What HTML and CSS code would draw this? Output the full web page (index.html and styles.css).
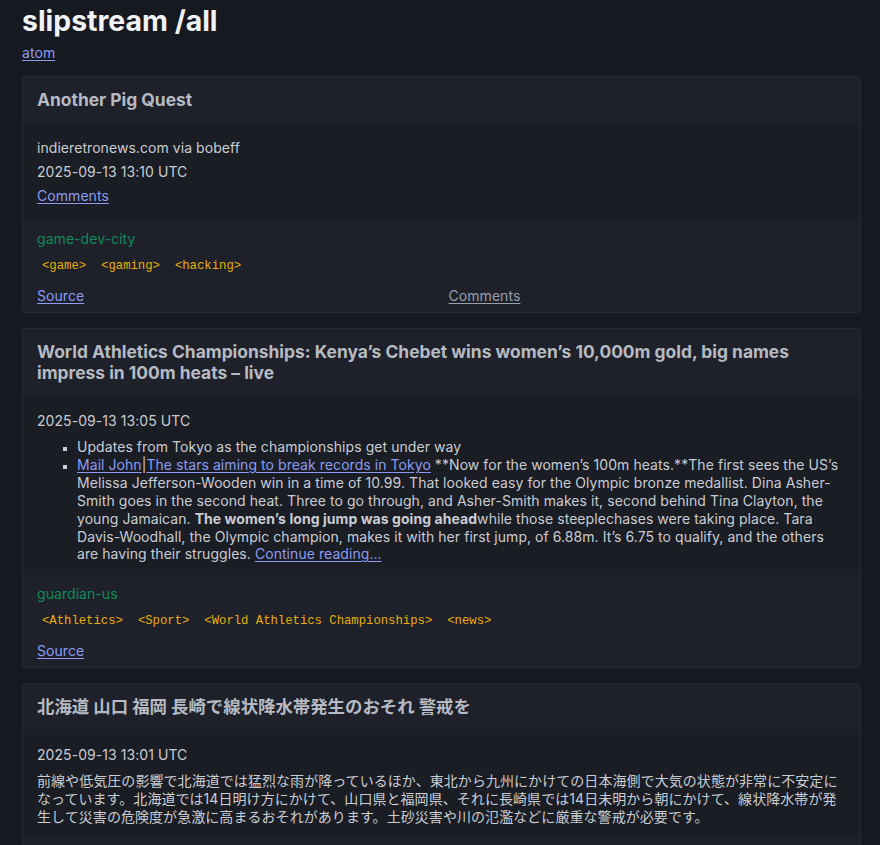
FILE: index.html
```html
<!DOCTYPE html>
<html lang="en">
<head>
<meta charset="utf-8">
<title>slipstream /all</title>
<link rel="stylesheet" href="styles.css">
</head>
<body>
<div class="page">
  <h1 class="site-title">slipstream /all</h1>
  <a class="feed-link" href="#">atom</a>

  <div class="feed">
    <article class="card">
      <header class="card-head"><h2 class="card-title">Another Pig Quest</h2></header>
      <div class="card-body">
        <div class="meta">indieretronews.com via bobeff</div>
        <div class="meta">2025-09-13 13:10 UTC</div>
        <div class="meta"><a href="#">Comments</a></div>
      </div>
      <footer class="card-foot">
        <div class="source-name">game-dev-city</div>
        <div class="tags"><span class="tag">&lt;game&gt;</span><span class="tag">&lt;gaming&gt;</span><span class="tag">&lt;hacking&gt;</span></div>
        <div class="links">
          <a href="#">Source</a>
          <a class="visited" href="#">Comments</a>
        </div>
      </footer>
    </article>

    <article class="card">
      <header class="card-head"><h2 class="card-title">World Athletics Championships: Kenya’s Chebet wins women’s 10,000m gold, big names impress in 100m heats – live</h2></header>
      <div class="card-body">
        <div class="meta">2025-09-13 13:05 UTC</div>
        <ul class="content list">
          <li>Updates from Tokyo as the championships get under way</li>
          <li><a href="#">Mail John</a>|<a href="#">The stars aiming to break records in Tokyo</a> **Now for the women’s 100m heats.**The first sees the US’s Melissa Jefferson-Wooden win in a time of 10.99. That looked easy for the Olympic bronze medallist. Dina Asher-Smith goes in the second heat. Three to go through, and Asher-Smith makes it, second behind Tina Clayton, the young Jamaican. <strong>The women’s long jump was going ahead</strong>while those steeplechases were taking place. Tara Davis-Woodhall, the Olympic champion, makes it with her first jump, of 6.88m. It’s 6.75 to qualify, and the others are having their struggles. <a href="#">Continue reading...</a></li>
        </ul>
      </div>
      <footer class="card-foot">
        <div class="source-name">guardian-us</div>
        <div class="tags"><span class="tag">&lt;Athletics&gt;</span><span class="tag">&lt;Sport&gt;</span><span class="tag">&lt;World Athletics Championships&gt;</span><span class="tag">&lt;news&gt;</span></div>
        <div class="links">
          <a href="#">Source</a>
        </div>
      </footer>
    </article>

    <article class="card">
      <header class="card-head"><h2 class="card-title" lang="ja">北海道 山口 福岡 長崎で線状降水帯発生のおそれ 警戒を</h2></header>
      <div class="card-body">
        <div class="meta">2025-09-13 13:01 UTC</div>
        <p class="content" lang="ja">前線や低気圧の影響で北海道では猛烈な雨が降っているほか、東北から九州にかけての日本海側で大気の状態が非常に不安定になっています。北海道では14日明け方にかけて、山口県と福岡県、それに長崎県では14日未明から朝にかけて、線状降水帯が発生して災害の危険度が急激に高まるおそれがあります。土砂災害や川の氾濫などに厳重な警戒が必要です。</p>
      </div>
      <footer class="card-foot">
        <div class="source-name">nhk</div>
      </footer>
    </article>
  </div>
</div>
</body>
</html>
```

FILE: styles.css
```css
html, body {
  margin: 0;
  padding: 0;
  background: #161920;
}

body {
  font-family: Inter, "Noto Sans CJK JP", sans-serif;
  font-size: 14px;
  letter-spacing: 0.06px;
  color: #c9ccd3;
}

a {
  color: #8b9bf2;
  text-decoration: underline;
  text-underline-offset: 2px;
}

a.visited {
  color: #9a9fac;
}

.page {
  padding: 5px 19px 20px 22px;
}

.site-title {
  margin: 0;
  font-size: 28.4px;
  line-height: 31px;
  font-weight: 700;
  letter-spacing: 0;
  color: #f1f2f4;
}

.feed-link {
  display: inline-block;
  margin-top: 5px;
  line-height: 24px;
}

.feed {
  margin-top: 11px;
  display: flex;
  flex-direction: column;
  gap: 15px;
}

.card {
  background: #1b1e25;
  border: 1px solid #262a33;
  border-radius: 3px;
  overflow: hidden;
}

.card-head {
  background: #1e2129;
  padding: 12px 14px;
}

.card-title {
  margin: 0;
  font-size: 17.4px;
  line-height: 21px;
  font-weight: 700;
  letter-spacing: 0;
  color: #b6bac3;
  font-family: Inter, "Noto Sans CJK JP", sans-serif;
}

.card-body {
  background: #1a1d24;
  padding: 14px 14px 12px;
}

.meta {
  line-height: 24px;
}

.content {
  margin: 5px 0 0;
  line-height: 17.9px;
}

.list {
  padding-left: 40px;
  list-style: square;
}

.list li::marker {
  font-size: 11px;
}

.card-foot {
  background: #1e2129;
  padding: 7px 14px 4px;
}

.source-name {
  color: #128a5c;
  line-height: 24px;
}

.tags {
  margin: 4px 0;
  display: flex;
  flex-wrap: wrap;
  gap: 5px;
}

.tag {
  padding: 0 5px;
  font-family: "Liberation Mono", monospace;
  font-size: 12.25px;
  letter-spacing: 0;
  line-height: 22px;
  color: #e8ad0e;
}

.links {
  margin-top: 7px;
  display: grid;
  grid-template-columns: 1fr 1fr;
  column-gap: 14px;
  line-height: 24px;
}

.links a {
  justify-self: start;
}
```
